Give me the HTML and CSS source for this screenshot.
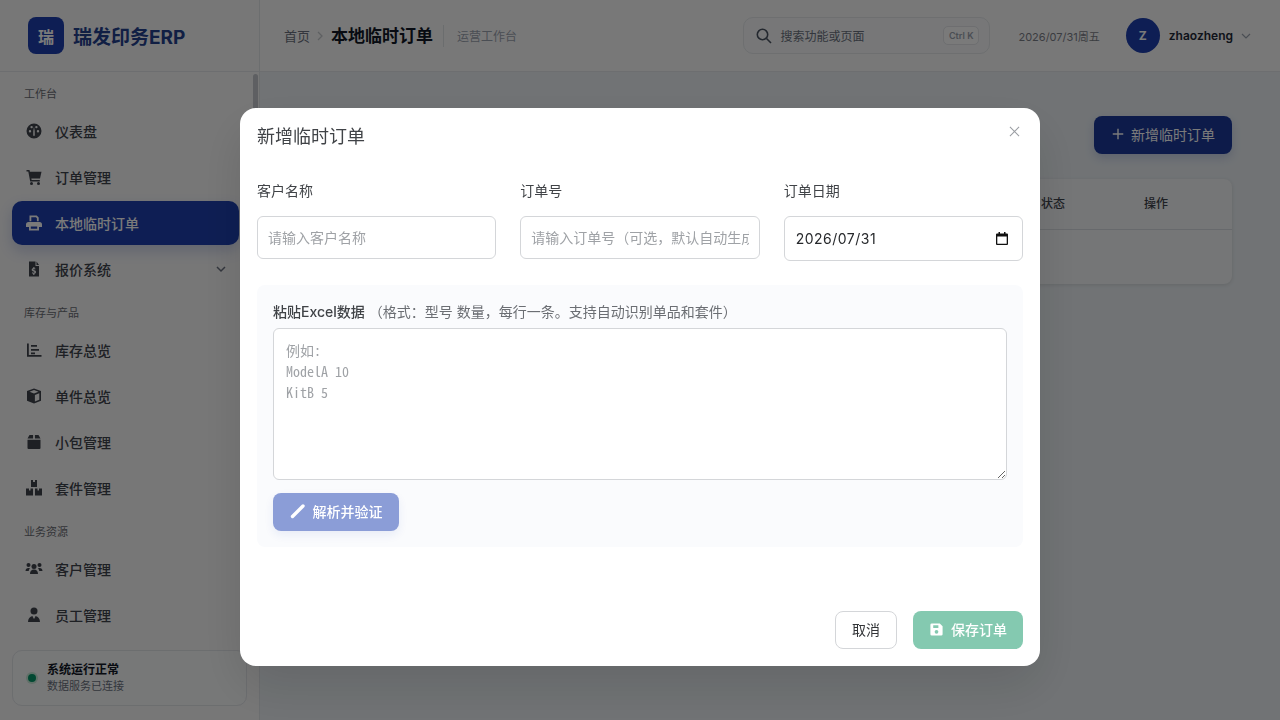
FILE: index.html
```html
<!DOCTYPE html>
<html lang="zh-CN">
<head>
    <meta charset="UTF-8">
    <meta name="viewport" content="width=device-width, initial-scale=1.0">
    <title>本地临时订单 - 瑞发印务ERP</title>
    <link rel="stylesheet" href="styles.css">
</head>
<body>
    <div class="app">
        <aside class="sidebar">
            <div class="brand">
                <div class="brand-logo">瑞</div>
                <div class="brand-name">瑞发印务ERP</div>
            </div>
            <nav class="nav">
                <div class="nav-label">工作台</div>
                <a class="nav-item">
                    <svg class="nav-icon" viewBox="0 0 20 20"><path d="M10 2.500a7.500 7.500 0 1 0 0 15 7.500 7.500 0 0 0 0-15zM6 11.500a1.200 1.200 0 1 1 0-2.400 1.200 1.200 0 0 1 0 2.400zm1.600-4.200a1.200 1.200 0 1 1 0-2.400 1.200 1.200 0 0 1 0 2.400zm3.200 7.500H9.200l.1-4.900.7-4.200.7 4.200zm1.600-7.500a1.200 1.200 0 1 1 0-2.400 1.200 1.200 0 0 1 0 2.400zm1.600 4.200a1.200 1.200 0 1 1 0-2.400 1.200 1.200 0 0 1 0 2.400z" fill-rule="evenodd"/></svg>
                    <span>仪表盘</span>
                </a>
                <a class="nav-item">
                    <svg class="nav-icon" viewBox="0 0 20 20"><path d="M2.500 3h3l.4 1.800h11.600l-1.500 6.700H7.300l.3 1.500h8.200v1.500H6.200L4.300 4.500H2.500z"/><circle cx="7.500" cy="16.500" r="1.500"/><circle cx="14.500" cy="16.500" r="1.500"/></svg>
                    <span>订单管理</span>
                </a>
                <a class="nav-item active">
                    <svg class="nav-icon" viewBox="0 0 20 20"><path d="M5.500 2.500h7.200l2 2v3.700h-1.800V5.200l-1-1H7.300v4H5.500zM4.500 9h11a2.500 2.500 0 0 1 2.500 2.500V14h-3v3.500H5V14H2v-2.500A2.500 2.500 0 0 1 4.500 9zM6.800 13.500v2.200h6.400v-2.200z" fill-rule="evenodd"/></svg>
                    <span>本地临时订单</span>
                </a>
                <a class="nav-item">
                    <svg class="nav-icon" viewBox="0 0 20 20"><path d="M5 2.500h6.500V7H15v10.500H5zM12.500 2.500 15 6h-2.500zM9.300 8v1.100c-1 .2-1.600.9-1.600 1.700 0 1 .8 1.400 1.700 1.700.7.2 1 .4 1 .7 0 .3-.3.5-.8.5-.4 0-.9-.2-1.300-.4l-.5 1c.4.3.9.4 1.400.5v1.200h1.200v-1.200c1-.2 1.600-.9 1.600-1.800 0-1-.8-1.400-1.700-1.700-.7-.2-1-.4-1-.6 0-.3.3-.4.7-.4s.8.1 1.100.3l.4-1a3 3 0 0 0-1-.4V8z" fill-rule="evenodd"/></svg>
                    <span>报价系统</span>
                    <svg class="nav-caret" viewBox="0 0 12 12"><path d="M2 4l4 4 4-4"/></svg>
                </a>

                <div class="nav-label">库存与产品</div>
                <a class="nav-item">
                    <svg class="nav-icon" viewBox="0 0 20 20"><path d="M3 3.500h1.800V15h12.700v1.800H3zM7 5h6v1.700H7zM7 9h8v1.700H7zM7 12.500h4v1.700H7z"/></svg>
                    <span>库存总览</span>
                </a>
                <a class="nav-item">
                    <svg class="nav-icon" viewBox="0 0 20 20"><path d="M10 2.500l7 2.600v9.600l-7 2.800-7-2.800V5.100zM5.500 5.700L10 7.400l4.500-1.700L10 4.100zM10.900 9v6.500l4.400-1.800V7.300z" fill-rule="evenodd"/></svg>
                    <span>单件总览</span>
                </a>
                <a class="nav-item">
                    <svg class="nav-icon" viewBox="0 0 20 20"><path d="M5.500 3h3.600v3.500H3.500zM10.900 3h3.600l2 3.500h-5.600zM3.500 7.800h13V16a1 1 0 0 1-1 1h-11a1 1 0 0 1-1-1z"/></svg>
                    <span>小包管理</span>
                </a>
                <a class="nav-item">
                    <svg class="nav-icon" viewBox="0 0 20 20"><path d="M7 2h2v2h2V2h2v7H7zM2 10.500h3v2h1.500v-2H9v7H2zM11 10.500h2.500v2H15v-2h3v7h-7z"/></svg>
                    <span>套件管理</span>
                </a>

                <div class="nav-label">业务资源</div>
                <a class="nav-item">
                    <svg class="nav-icon" viewBox="0 0 20 20"><circle cx="4.500" cy="6" r="2"/><circle cx="15.500" cy="6" r="2"/><circle cx="10" cy="7.500" r="2.500"/><path d="M1.500 12c0-2 1.200-3 3-3 .6 0 1.100.1 1.500.4C5.200 10 4.800 11 4.800 12zM18.500 12c0-2-1.200-3-3-3-.6 0-1.100.1-1.500.4.800.6 1.200 1.600 1.200 2.600zM6 15c0-3 1.500-4.500 4-4.500s4 1.500 4 4.500z"/></svg>
                    <span>客户管理</span>
                </a>
                <a class="nav-item">
                    <svg class="nav-icon" viewBox="0 0 20 20"><circle cx="10" cy="6" r="3.500"/><path d="M4 17c0-3.500 1.800-5.500 4.500-6l1 3 .5-2 .5 2 1-3c2.700.5 4.500 2.500 4.500 6z"/></svg>
                    <span>员工管理</span>
                </a>
            </nav>
            <div class="scroll-thumb"></div>
            <div class="status-card">
                <span class="status-dot"></span>
                <div>
                    <div class="status-title">系统运行正常</div>
                    <div class="status-sub">数据服务已连接</div>
                </div>
            </div>
        </aside>

        <div class="content">
            <header class="topbar">
                <span class="crumb">首页</span>
                <svg class="crumb-sep" viewBox="0 0 12 12"><path d="M4 2l4 4-4 4"/></svg>
                <h1 class="page-title">本地临时订单</h1>
                <span class="page-sub">运营工作台</span>
                <div class="search">
                    <svg class="search-icon" viewBox="0 0 18 18"><circle cx="7.500" cy="7.500" r="5.200"/><path d="M11.500 11.500L16 16"/></svg>
                    <span class="search-text">搜索功能或页面</span>
                    <kbd class="search-key">Ctrl K</kbd>
                </div>
                <span class="today">2026/07/31周五</span>
                <div class="avatar">Z</div>
                <span class="username">zhaozheng</span>
                <svg class="user-caret" viewBox="0 0 12 12"><path d="M2 4l4 4 4-4"/></svg>
            </header>
            <main class="main">
                <div class="toolbar">
                    <button class="add-btn">
                        <svg viewBox="0 0 16 16"><path d="M8 2v12M2 8h12"/></svg>
                        新增临时订单
                    </button>
                </div>
                <div class="table-card">
                    <div class="table-head">
                        <span class="col-status">状态</span>
                        <span class="col-action">操作</span>
                    </div>
                </div>
            </main>
        </div>
    </div>

    <div class="overlay">
        <div class="modal">
            <div class="modal-head">
                <h2>新增临时订单</h2>
                <svg class="modal-close" viewBox="0 0 12 12"><path d="M1 1l10 10M11 1L1 11"/></svg>
            </div>
            <div class="form-grid">
                <div class="field">
                    <label>客户名称</label>
                    <input type="text" placeholder="请输入客户名称">
                </div>
                <div class="field">
                    <label>订单号</label>
                    <input type="text" placeholder="请输入订单号（可选，默认自动生成）">
                </div>
                <div class="field">
                    <label>订单日期</label>
                    <div class="date-box">
                        <input type="text" value="2026/07/31">
                        <svg viewBox="0 0 12 13"><path d="M2.500 0h1.500v1.500h4V0h1.500v1.500H11a1 1 0 0 1 1 1V12a1 1 0 0 1-1 1H1a1 1 0 0 1-1-1V2.500a1 1 0 0 1 1-1h1.500zM1.300 4.500v7.200h9.400V4.500z" fill-rule="evenodd"/></svg>
                    </div>
                </div>
            </div>
            <div class="paste-panel">
                <div class="paste-label"><b>粘贴Excel数据</b> <span>（格式：型号 数量，每行一条。支持自动识别单品和套件）</span></div>
                <textarea placeholder="例如:&#10;ModelA 10&#10;KitB 5"></textarea>
                <button class="parse-btn">
                    <svg viewBox="0 0 16 16"><path d="M2.500 13.500L13 3"/></svg>
                    解析并验证
                </button>
            </div>
            <div class="modal-foot">
                <button class="cancel-btn">取消</button>
                <button class="save-btn">
                    <svg viewBox="0 0 16 16"><path d="M3 1.500h8.500L14.500 4.500V13a1.500 1.500 0 0 1-1.500 1.500H3A1.500 1.500 0 0 1 1.500 13V3A1.500 1.500 0 0 1 3 1.500zM4.500 3.500V6.500H10V3.500zM8 8.500a2 2 0 1 0 0 4 2 2 0 0 0 0-4z" fill-rule="evenodd"/></svg>
                    保存订单
                </button>
            </div>
        </div>
    </div>
</body>
</html>
```

FILE: styles.css
```css
* {
    margin: 0;
    padding: 0;
    box-sizing: border-box;
    font-family: Inter, 'Noto Sans CJK SC', sans-serif;
}

body {
    width: 1280px;
    height: 720px;
    overflow: hidden;
    background: #f0f4f8;
}

button {
    padding-bottom: 2px;
}

.app {
    display: flex;
    height: 720px;
}

/* sidebar */
.sidebar {
    position: relative;
    width: 260px;
    flex-shrink: 0;
    display: flex;
    flex-direction: column;
    background: #f8f8f9;
    border-right: 1px solid #e2e5e9;
}

.brand {
    height: 72px;
    flex-shrink: 0;
    display: flex;
    align-items: center;
    gap: 9px;
    padding-left: 28px;
    border-bottom: 1px solid #e4e6ea;
}

.brand-logo {
    width: 36px;
    height: 37px;
    display: flex;
    align-items: center;
    justify-content: center;
    border-radius: 8px;
    background: #1e40af;
    color: #fff;
    font-size: 16px;
    font-weight: 700;
}

.brand-name {
    color: #24418f;
    font-size: 19px;
    font-weight: 700;
}

.nav {
    flex: 1;
    padding: 14px 20px 0 12px;
    overflow: hidden;
}

.nav-label {
    height: 16px;
    line-height: 16px;
    margin: 14px 0 7px 12px;
    color: #6b6e73;
    font-size: 11px;
}

.nav-label:first-child {
    margin-top: 0;
}

.nav-item {
    display: flex;
    align-items: center;
    gap: 11px;
    height: 44px;
    margin-bottom: 2px;
    padding: 0 12px;
    border-radius: 10px;
    color: #3f444d;
    font-size: 14px;
    font-weight: 500;
}

.nav-item.active {
    background: #1e40af;
    color: #fff;
    box-shadow: 0 6px 14px rgba(30, 64, 175, 0.2);
}

.nav-icon {
    width: 20px;
    height: 20px;
    fill: currentColor;
}

.nav-caret {
    width: 12px;
    height: 12px;
    margin-left: auto;
    fill: none;
    stroke: #6b7280;
    stroke-width: 1.5;
}

.scroll-thumb {
    position: absolute;
    top: 74px;
    left: 253px;
    width: 5px;
    height: 120px;
    border-radius: 3px;
    background: #c4c7cc;
}

.status-card {
    display: flex;
    align-items: center;
    gap: 11px;
    height: 56px;
    margin: 0 12px 14px;
    padding: 0 15px;
    border: 1px solid #e2e5e9;
    border-radius: 10px;
    background: #f9fafb;
}

.status-dot {
    width: 8px;
    height: 8px;
    border-radius: 50%;
    background: #059669;
    box-shadow: 0 0 0 2px #c8ead9;
}

.status-title {
    color: #111827;
    font-size: 12px;
    font-weight: 600;
    line-height: 16px;
}

.status-sub {
    color: #6b7280;
    font-size: 11px;
    line-height: 16px;
}

/* top bar */
.content {
    flex: 1;
    display: flex;
    flex-direction: column;
    min-width: 0;
}

.topbar {
    height: 72px;
    flex-shrink: 0;
    display: flex;
    align-items: center;
    padding: 0 28px 0 24px;
    background: #fbfbfb;
    border-bottom: 1px solid #e4e6ea;
}

.crumb {
    color: #6b7280;
    font-size: 13px;
}

.crumb-sep {
    width: 12px;
    height: 12px;
    margin: 0 5px 0 4px;
    fill: none;
    stroke: #c4c8ce;
    stroke-width: 1.3;
}

.page-title {
    color: #111827;
    font-size: 17px;
    font-weight: 700;
    padding-right: 10px;
    border-right: 1px solid #e0e3e7;
    line-height: 22px;
}

.page-sub {
    margin-left: 13px;
    color: #9ca3af;
    font-size: 12px;
}

.search {
    display: flex;
    align-items: center;
    width: 247px;
    height: 37px;
    margin-left: auto;
    padding: 0 10px 0 11px;
    border: 1px solid #e5e8eb;
    border-radius: 10px;
    background: #f8f9fb;
}

.search-icon {
    width: 18px;
    height: 18px;
    fill: none;
    stroke: #4b5563;
    stroke-width: 1.6;
}

.search-text {
    margin-left: 7px;
    color: #6b7280;
    font-size: 12px;
}

.search-key {
    margin-left: auto;
    padding: 3px 5px;
    border: 1px solid #e5e7eb;
    border-radius: 5px;
    background: #fff;
    color: #9ca3af;
    font-size: 9px;
    font-weight: 600;
}

.today {
    margin-left: 28px;
    color: #7b8088;
    font-size: 11px;
}

.avatar {
    width: 34px;
    height: 35px;
    margin-left: 26px;
    display: flex;
    align-items: center;
    justify-content: center;
    border-radius: 50%;
    background: #1e40af;
    color: #fff;
    font-size: 12px;
    font-weight: 700;
}

.username {
    margin-left: 9px;
    color: #1f2937;
    font-size: 12px;
    font-weight: 600;
}

.user-caret {
    width: 12px;
    height: 12px;
    margin-left: 7px;
    fill: none;
    stroke: #9ca3af;
    stroke-width: 1.2;
}

/* page behind the dialog */
.main {
    flex: 1;
    padding: 44px 48px 0 24px;
    background: #ecf1f5;
}

.toolbar {
    display: flex;
    justify-content: flex-end;
}

.add-btn {
    display: flex;
    align-items: center;
    gap: 6px;
    width: 138px;
    height: 38px;
    justify-content: center;
    border: none;
    border-radius: 8px;
    background: #1c3a9c;
    color: #fff;
    font-size: 14px;
    box-shadow: 0 4px 10px rgba(30, 64, 175, 0.2);
}

.add-btn svg {
    width: 14px;
    height: 14px;
    fill: none;
    stroke: currentColor;
    stroke-width: 1.6;
}

.table-card {
    height: 105px;
    margin-top: 25px;
    border-radius: 8px;
    background: #f4f6f8;
    box-shadow: 0 1px 4px rgba(0, 0, 0, 0.12);
}

.table-head {
    display: flex;
    justify-content: flex-end;
    align-items: center;
    height: 51px;
    padding-bottom: 3px;
    border-bottom: 1px solid #d8dce1;
    color: #3f444d;
    font-size: 12px;
    font-weight: 500;
}

.col-status {
    margin-right: 79px;
}

.col-action {
    margin-right: 64px;
}

/* dialog */
.overlay {
    position: fixed;
    inset: 0;
    display: flex;
    justify-content: center;
    align-items: flex-start;
    padding-top: 108px;
    background: rgba(0, 0, 0, 0.52);
}

.modal {
    display: flex;
    flex-direction: column;
    width: 800px;
    height: 558px;
    padding: 0 17px;
    border-radius: 16px;
    background: #fff;
    box-shadow: 0 20px 50px rgba(0, 0, 0, 0.12);
}

.modal-head {
    display: flex;
    justify-content: space-between;
    padding-top: 16px;
    height: 71px;
}

.modal-head h2 {
    color: #404347;
    font-size: 18px;
    font-weight: 400;
    line-height: 25px;
}

.modal-close {
    width: 11px;
    height: 11px;
    margin: 2px 3px 0 0;
    fill: none;
    stroke: #9a9da2;
    stroke-width: 1.1;
}

.form-grid {
    display: grid;
    grid-template-columns: repeat(3, 1fr);
    gap: 24px;
    align-items: start;
}

.field label {
    display: block;
    height: 24px;
    margin-bottom: 13px;
    color: #404347;
    font-size: 14px;
    line-height: 24px;
}

.field input {
    display: block;
    width: 100%;
    height: 43px;
    padding: 0 10px;
    border: 1px solid #d4d6d9;
    border-radius: 6px;
    background: #fff;
    color: #404347;
    font-size: 14px;
    outline: none;
}

.field input::placeholder {
    color: #9fa2a6;
}

.date-box {
    display: flex;
    align-items: center;
    height: 45px;
    padding: 0 14px 0 11px;
    border: 1px solid #d4d6d9;
    border-radius: 6px;
    background: #fff;
}

.field .date-box input {
    flex: 1;
    min-width: 0;
    height: 100%;
    padding: 0;
    border: none;
    background: none;
    color: #26282b;
    letter-spacing: 0.5px;
}

.date-box svg {
    width: 12px;
    height: 13px;
    fill: #111;
}

.paste-panel {
    margin-top: 24px;
    height: 262px;
    padding: 16px;
    border-radius: 8px;
    background: #fafbfd;
}

.paste-label {
    height: 22px;
    margin-bottom: 5px;
    font-size: 14px;
    line-height: 22px;
}

.paste-label b {
    color: #404347;
    font-weight: 500;
}

.paste-label span {
    color: #6b6e73;
    font-size: 14px;
}

.paste-panel textarea {
    display: block;
    width: 100%;
    height: 152px;
    padding: 11px 12px;
    border: 1px solid #d4d6d9;
    border-radius: 6px;
    background: #fff;
    font-family: 'Noto Sans Mono CJK SC', 'Liberation Mono', monospace;
    font-size: 14px;
    line-height: 21px;
    outline: none;
}

.paste-panel textarea::placeholder {
    color: #9fa2a6;
}

.parse-btn {
    display: flex;
    align-items: center;
    justify-content: center;
    gap: 7px;
    width: 126px;
    height: 38px;
    margin-top: 13px;
    border: none;
    border-radius: 8px;
    background: #8b9dd7;
    color: #fff;
    font-size: 14px;
    font-weight: 500;
    box-shadow: 0 4px 10px rgba(30, 64, 175, 0.08);
}

.parse-btn svg {
    width: 16px;
    height: 16px;
    fill: none;
    stroke: #fff;
    stroke-width: 3.4;
    stroke-linecap: round;
}

.modal-foot {
    display: flex;
    justify-content: flex-end;
    gap: 16px;
    margin-top: 64px;
}

.cancel-btn {
    width: 62px;
    height: 38px;
    border: 1px solid #d4d6d9;
    border-radius: 8px;
    background: #fff;
    color: #333538;
    font-size: 14px;
}

.save-btn {
    display: flex;
    align-items: center;
    justify-content: center;
    gap: 7px;
    width: 110px;
    height: 38px;
    border: none;
    border-radius: 8px;
    background: #84c9b0;
    color: #fff;
    font-size: 14px;
    font-weight: 500;
}

.save-btn svg {
    width: 15px;
    height: 15px;
    fill: #fff;
}
```
